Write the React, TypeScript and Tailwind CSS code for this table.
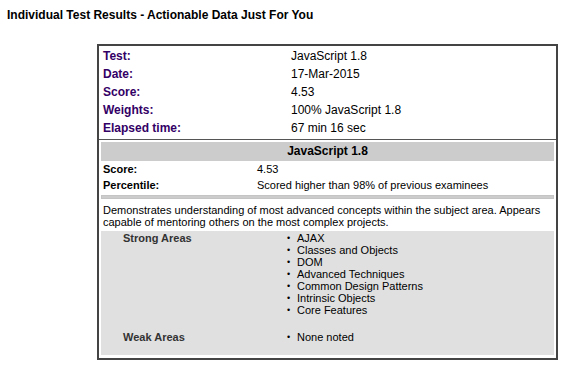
import React from 'react';

const summary = [
  { label: 'Test:', value: 'JavaScript 1.8' },
  { label: 'Date:', value: '17-Mar-2015' },
  { label: 'Score:', value: '4.53' },
  { label: 'Weights:', value: '100% JavaScript 1.8' },
  { label: 'Elapsed time:', value: '67 min 16 sec' },
];

const strongAreas = [
  'AJAX',
  'Classes and Objects',
  'DOM',
  'Advanced Techniques',
  'Common Design Patterns',
  'Intrinsic Objects',
  'Core Features',
];

function BulletList({ items }: { items: string[] }) {
  return (
    <ul>
      {items.map((item) => (
        <li key={item} className="flex">
          <span className="w-[10px] text-[9px]">•</span>
          <span>{item}</span>
        </li>
      ))}
    </ul>
  );
}

export default function App() {
  return (
    <div className="w-[580px] h-[367px] bg-white text-black font-['Liberation_Sans',Arial,sans-serif]">
      <div className="pl-[7px] pt-[8px] text-[12px] leading-[14px] font-bold">
        Individual Test Results - Actionable Data Just For You
      </div>

      <div className="ml-[97px] mt-[22px] w-[461px] border-2 border-[#444]">
        <div className="grid grid-cols-[188px_1fr] px-[4px] pt-[1px] pb-[2px] text-[12px] leading-[18px]">
          {summary.map((row) => (
            <React.Fragment key={row.label}>
              <div className="font-bold text-[#330066]">{row.label}</div>
              <div>{row.value}</div>
            </React.Fragment>
          ))}
        </div>

        <div className="border-t border-[#555] p-[2px] pb-[3px]">
          <div className="h-[19px] bg-[#cccccc] text-center text-[12px] leading-[19px] font-bold">
            JavaScript 1.8
          </div>

          <div className="grid grid-cols-[154px_1fr] px-[2px] text-[11px] leading-[16px]">
            <div className="font-bold">Score:</div>
            <div>4.53</div>
            <div className="font-bold">Percentile:</div>
            <div>Scored higher than 98% of previous examinees</div>
          </div>

          <div className="mt-[2px] h-[4px] bg-[#cccccc] border border-[#c4c4c4]" />

          <p className="mt-[5px] px-[2px] text-[11px] leading-[12px]">
            Demonstrates understanding of most advanced concepts within the subject area. Appears capable of mentoring others on the most complex projects.
          </p>

          <div className="mt-[3px] bg-[#e0e0e0] pl-[22px] pt-[1px] pb-[12px] text-[11px] leading-[12px]">
            <div className="grid grid-cols-[164px_1fr]">
              <div className="font-bold text-[#333]">Strong Areas</div>
              <BulletList items={strongAreas} />
            </div>
            <div className="mt-[15px] grid grid-cols-[164px_1fr]">
              <div className="font-bold text-[#333]">Weak Areas</div>
              <BulletList items={['None noted']} />
            </div>
          </div>
        </div>
      </div>
    </div>
  );
}
